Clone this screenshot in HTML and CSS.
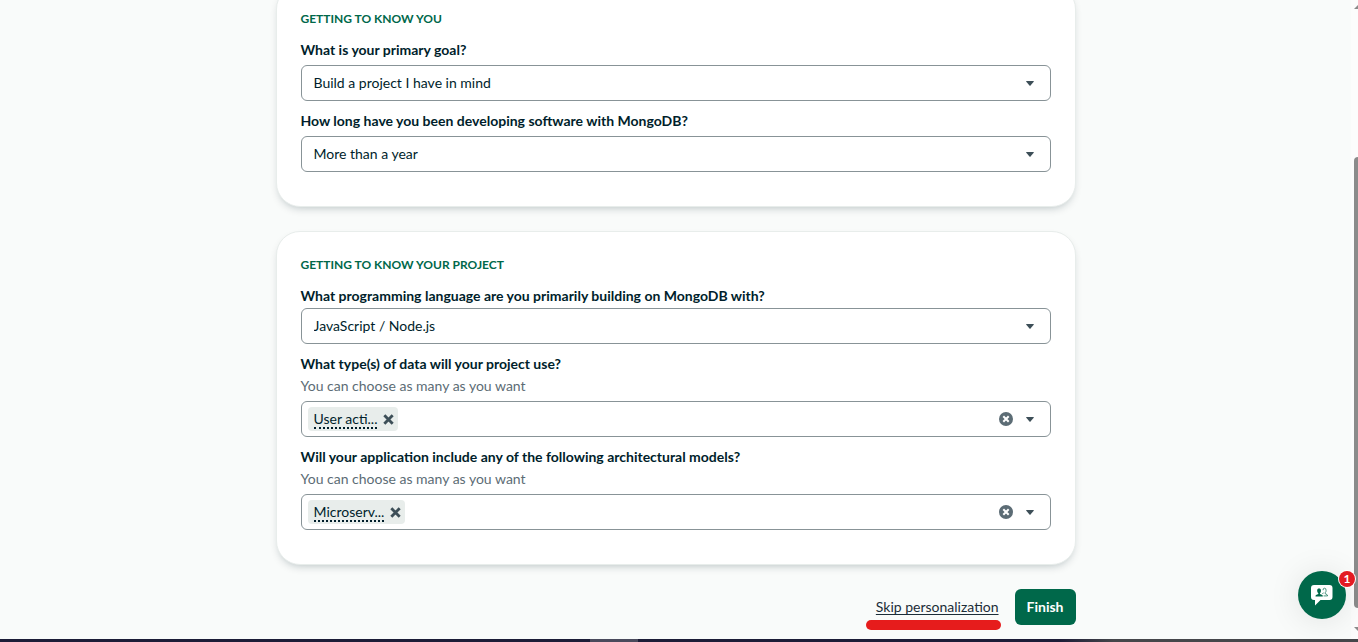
FILE: index.html
```html
<!DOCTYPE html>
<html lang="en">
<head>
<meta charset="utf-8">
<title>Personalize your experience</title>
<link rel="stylesheet" href="styles.css">
</head>
<body>
<div class="screen">
  <div class="viewport">
    <main class="page">
      <form class="form">
        <section class="card card-scrolled">
          <h2 class="card-title">Getting to know you</h2>
          <div class="field">
            <label class="label" for="goal">What is your primary goal?</label>
            <div class="control">
              <select class="select" id="goal"><option>Build a project I have in mind</option></select>
              <svg class="caret" viewBox="0 0 8 5" aria-hidden="true"><path d="M0.6 0h6.8q.8 0 .3.7L4.5 4.6q-.5.6-1 0L.3.7Q-.2 0 .6 0z"/></svg>
            </div>
          </div>
          <div class="field">
            <label class="label" for="experience">How long have you been developing software with MongoDB?</label>
            <div class="control">
              <select class="select" id="experience"><option>More than a year</option></select>
              <svg class="caret" viewBox="0 0 8 5" aria-hidden="true"><path d="M0.6 0h6.8q.8 0 .3.7L4.5 4.6q-.5.6-1 0L.3.7Q-.2 0 .6 0z"/></svg>
            </div>
          </div>
        </section>

        <section class="card">
          <h2 class="card-title">Getting to know your project</h2>
          <div class="field">
            <label class="label" for="language">What programming language are you primarily building on MongoDB with?</label>
            <div class="control control-tight">
              <select class="select" id="language"><option>JavaScript / Node.js</option></select>
              <svg class="caret" viewBox="0 0 8 5" aria-hidden="true"><path d="M0.6 0h6.8q.8 0 .3.7L4.5 4.6q-.5.6-1 0L.3.7Q-.2 0 .6 0z"/></svg>
            </div>
          </div>
          <div class="field">
            <label class="label" for="data-types">What type(s) of data will your project use?</label>
            <p class="hint">You can choose as many as you want</p>
            <div class="control combobox">
              <span class="chip"><span class="chip-text">User acti...</span><button class="icon-button" type="button" aria-label="Remove"><svg class="remove" viewBox="0 0 10 10"><path d="M1.200 1.200l7.600 7.600M8.800 1.200l-7.600 7.600"/></svg></button></span>
              <input class="combobox-input" id="data-types" type="text">
              <button class="icon-button" type="button" aria-label="Clear selection"><svg class="clear" viewBox="0 0 14 14"><circle cx="7" cy="7" r="7"/><path d="M4.300 4.300l5.400 5.400M9.700 4.300L4.300 9.700"/></svg></button>
              <svg class="caret" viewBox="0 0 8 5" aria-hidden="true"><path d="M0.6 0h6.8q.8 0 .3.7L4.5 4.6q-.5.6-1 0L.3.7Q-.2 0 .6 0z"/></svg>
            </div>
          </div>
          <div class="field">
            <label class="label" for="models">Will your application include any of the following architectural models?</label>
            <p class="hint">You can choose as many as you want</p>
            <div class="control combobox">
              <span class="chip"><span class="chip-text">Microserv...</span><button class="icon-button" type="button" aria-label="Remove"><svg class="remove" viewBox="0 0 10 10"><path d="M1.200 1.200l7.600 7.600M8.800 1.200l-7.600 7.600"/></svg></button></span>
              <input class="combobox-input" id="models" type="text">
              <button class="icon-button" type="button" aria-label="Clear selection"><svg class="clear" viewBox="0 0 14 14"><circle cx="7" cy="7" r="7"/><path d="M4.300 4.300l5.400 5.400M9.700 4.300L4.300 9.700"/></svg></button>
              <svg class="caret" viewBox="0 0 8 5" aria-hidden="true"><path d="M0.6 0h6.8q.8 0 .3.7L4.5 4.6q-.5.6-1 0L.3.7Q-.2 0 .6 0z"/></svg>
            </div>
          </div>
        </section>

        <div class="actions">
          <a class="skip" href="#">Skip personalization<span class="marker"></span></a>
          <button class="finish" type="submit">Finish</button>
        </div>
      </form>
    </main>
    <div class="scrollbar" aria-hidden="true">
      <svg class="scroll-arrow" viewBox="0 0 4 4"><path d="M0 4L4 0v4z"/></svg>
      <div class="thumb"></div>
      <svg class="scroll-arrow" viewBox="0 0 4 4"><path d="M0 0h4v4z"/></svg>
    </div>
    <button class="chat" type="button" aria-label="Open chat">
      <svg class="chat-icon" viewBox="0 0 24 22"><path fill="#fff" d="M4 1h15.500q3 0 3 3v9q0 3-3 3h-9l-5.500 5.500V16H4q-3 0-3-3V4q0-3 3-3z"/><path fill="#00684a" d="M9 4.200q2.200 0 2 2.500-.1 1.800-1 2.500v.7l2.300 1q.5.300.5 1.600H5.500q0-1.300.5-1.600l2.300-1v-.7q-1-.8-1.200-2.500-.1-2.500 1.900-2.500z"/><path fill="none" stroke="#00684a" stroke-width=".7" d="M13 6.200q0-2 1.500-2 1.700 0 1.600 2.200 0 1.500-.9 2.300v1l1.700.8q.6.300.7 1.400h-4M12.300 9.600l1.400-.7"/></svg>
      <span class="badge">1</span>
    </button>
  </div>
  <div class="taskbar"><span class="taskbar-item"></span></div>
</div>
</body>
</html>
```
FILE: styles.css
```css
* { box-sizing: border-box; }
body {
  margin: 0;
  background: #f9fbfa;
  color: #001e2b;
  font-family: Lato, "Open Sans", sans-serif;
  font-size: 14px;
  line-height: 20px;
}
button, input, select { font: inherit; color: inherit; }
.screen { display: flex; flex-direction: column; height: 100vh; overflow: hidden; }
.viewport { position: relative; display: flex; flex: 1; min-height: 0; }
.page { flex: 1; overflow: hidden; }
.form { max-width: 800px; margin: 0 auto; }

.card {
  margin-bottom: 24px;
  padding: 23px 24px 34px;
  border: 1px solid #e8edeb;
  border-radius: 24px;
  background: #fff;
  box-shadow: 0 4px 10px -4px rgba(0, 30, 43, 0.3);
}
/* The form is scrolled so that the first card starts above the window. */
.card-scrolled { margin-top: -15px; }
.card-title {
  margin: 0 0 11px;
  color: #00684a;
  font-size: 12px;
  font-weight: 700;
  line-height: 20px;
  text-transform: uppercase;
}
.field + .field { margin-top: 10px; }
.label { display: block; font-weight: 700; }
.hint { margin: 2px 0 0; color: #5c6c75; }
.control { position: relative; margin-top: 5px; }
.control-tight { margin-top: 2px; }
.select {
  display: block;
  width: 100%;
  height: 36px;
  padding: 0 32px 0 12px;
  border: 1px solid #889397;
  border-radius: 6px;
  background: #fff;
  appearance: none;
}
.caret { width: 8px; height: 5px; fill: #3d4f58; }
.select + .caret { position: absolute; top: 16px; right: 17px; pointer-events: none; }

.combobox {
  display: flex;
  align-items: center;
  height: 36px;
  padding: 0 16px 0 6px;
  border: 1px solid #889397;
  border-radius: 6px;
  background: #fff;
}
.combobox-input {
  flex: 1;
  min-width: 0;
  border: 0;
  background: none;
  outline: 0;
}
.chip {
  display: flex;
  align-items: center;
  gap: 6px;
  height: 24px;
  padding: 0 4px 0 6px;
  border-radius: 4px;
  background: #e8edeb;
}
.chip-text { height: 19px; line-height: 18px; border-bottom: 2px dotted #001e2b; }
.icon-button { display: flex; padding: 0; border: 0; background: none; }
.remove { width: 11px; height: 11px; fill: none; stroke: #3d4f58; stroke-width: 2.6; }
.clear { width: 14px; height: 14px; margin-right: 13px; fill: #5c6c75; }
.clear path { stroke: #fff; stroke-width: 2; }

.actions { display: flex; align-items: center; justify-content: flex-end; gap: 16px; }
.skip { position: relative; color: #1c2d38; text-underline-offset: 2px; }
.marker {
  position: absolute;
  top: 23px;
  right: -2px;
  left: -10px;
  height: 10px;
  border-radius: 5px;
  background: #e61c1c;
}
.finish {
  height: 36px;
  padding: 0 12px;
  border: 0;
  border-radius: 6px;
  background: #00684a;
  color: #fff;
  font-weight: 700;
}

.scrollbar {
  display: flex;
  flex-direction: column;
  align-items: flex-end;
  width: 7px;
  padding: 5px 0 8px;
  background: #fcfcfc;
}
.scroll-arrow { width: 4px; height: 4px; fill: #8b8b8b; }
.thumb {
  width: 4px;
  height: 72%;
  margin: auto 0 19px;
  border-radius: 4px 0 0 4px;
  background: #8b8b8b;
}

.chat {
  position: absolute;
  right: 12px;
  bottom: 20px;
  display: grid;
  place-items: center;
  width: 48px;
  height: 48px;
  padding: 0;
  border: 0;
  border-radius: 50%;
  background: #00684a;
  box-shadow: 0 2px 32px rgba(0, 0, 0, 0.1);
}
.chat-icon { width: 24px; height: 22px; }
.badge {
  position: absolute;
  top: 0;
  right: -9px;
  width: 16px;
  height: 16px;
  border-radius: 50%;
  background: #e31b23;
  box-shadow: 0 0 0 1px #fff;
  color: #fff;
  font-size: 12px;
  font-weight: 700;
  line-height: 16px;
  text-align: center;
}
.taskbar {
  display: flex;
  justify-content: center;
  height: 3px;
  background: linear-gradient(to right, #1c1c37 78%, #45464a 82%);
}
.taskbar-item { width: 48px; margin-right: 130px; background: #4a4a5c; }
```
